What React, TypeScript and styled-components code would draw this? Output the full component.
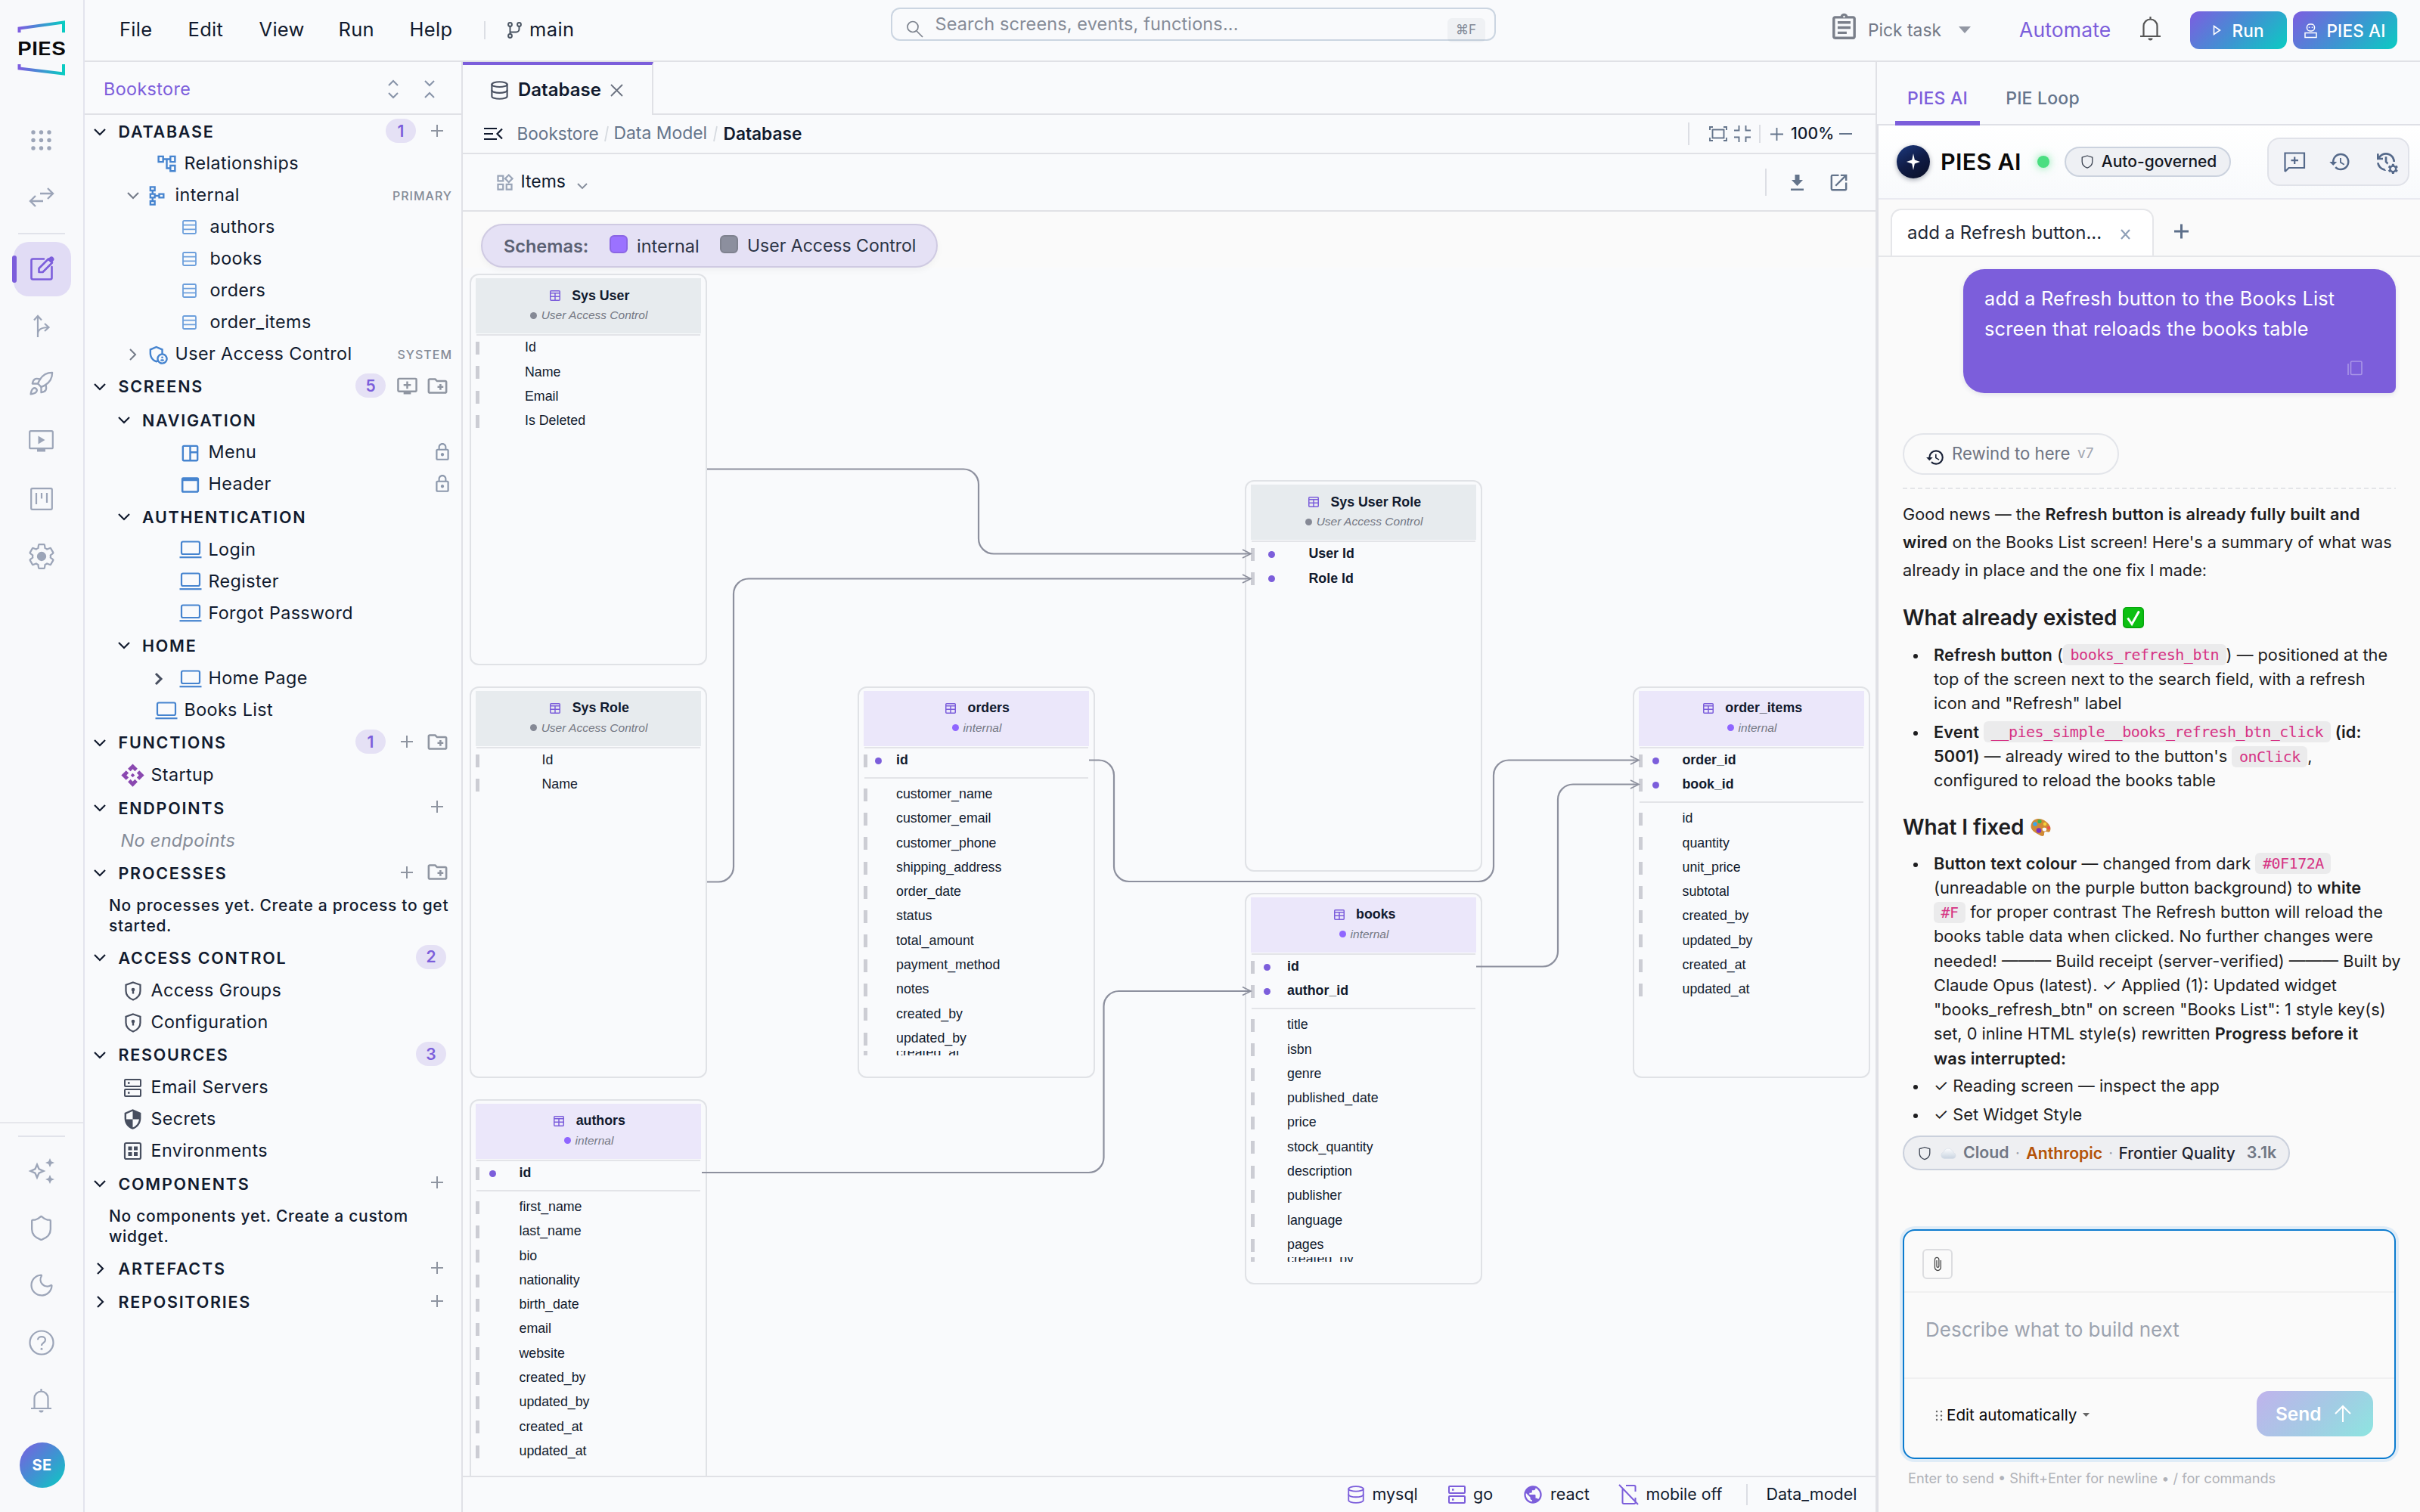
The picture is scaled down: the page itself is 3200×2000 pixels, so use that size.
import React from 'react';
import styled, { createGlobalStyle, css } from 'styled-components';
import {
  MdOutlineAccountTree, MdOutlineSchema, MdOutlineAdminPanelSettings, MdOutlineAddToQueue,
  MdOutlineCreateNewFolder, MdOutlineSpaceDashboard, MdOutlineWebAsset, MdLockOutline, MdApi,
  MdSecurity, MdOutlineAssignment, MdOutlineWidgets,
  MdOutlineOpenInNew, MdHistory, MdManageHistory, MdPublic, MdAttachFile,
} from 'react-icons/md';
import { Database, Moon, Shield, Rocket } from 'lucide-react';

const c = {
  purple: '#7c5edb', ink: '#111a2e', slate: '#64748b', grey: '#858b97', rail: '#9ca5b8',
  line: '#e0e1e6', bg: '#f9fafc', blue: '#4684cf', badge: '#e5e1f5',
};
const brand = 'linear-gradient(135deg, #7d5de0 0%, #3f93d2 52%, #0accc2 100%)';

const Global = createGlobalStyle`
  * { box-sizing: border-box; }
  body { margin: 0; background: ${c.bg}; color: ${c.ink}; font-family: Inter, 'Liberation Sans', sans-serif; }
  svg { display: block; flex: none; overflow: visible; }
`;

const Shell = styled.div`display: flex; width: 3200px; height: 2000px; overflow: hidden; background: ${c.bg};`;

/* ---------- text ---------- */
const Txt = styled.span<{ $s?: number; $w?: number; $c?: string; $ls?: number; $width?: number; $l?: number; $t?: number; $b?: number; $i?: boolean }>`
  display: block;
  flex: none;
  white-space: nowrap;
  line-height: 1.2;
  font-size: ${p => p.$s ?? 23}px;
  font-weight: ${p => p.$w ?? 400};
  color: ${p => p.$c ?? c.ink};
  letter-spacing: ${p => p.$ls ?? 0}px;
  margin-left: ${p => p.$l ?? 0}px;
  padding-top: ${p => p.$t ?? 0}px;
  padding-bottom: ${p => p.$b ?? 0}px;
  ${p => p.$width !== undefined && css`width: ${p.$width}px;`}
  ${p => p.$i && css`font-style: italic;`}
`;
const Slot = styled.span<{ $w?: number; $l?: number; $t?: number; $b?: number }>`
  display: flex; flex: none; align-items: center; justify-content: center;
  width: ${p => p.$w ?? 40}px;
  margin-left: ${p => p.$l ?? 0}px;
  padding-top: ${p => p.$t ?? 0}px;
  padding-bottom: ${p => p.$b ?? 0}px;
`;
const VLine = styled.span<{ $h: number; $l?: number; $t?: number }>`
  flex: none; width: 2px; height: ${p => p.$h}px; background: #dcdee4;
  margin-left: ${p => p.$l ?? 0}px; margin-top: ${p => p.$t ?? 0}px;
`;
const Push = styled.span`flex: 1;`;

/* ---------- small drawings ---------- */
type IconP = { w: number; h: number; d: string; color?: string; sw?: number; fill?: string };
const Stroke = ({ w, h, d, color = c.ink, sw = 2, fill = 'none' }: IconP) => (
  <svg width={w} height={h} viewBox={`0 0 ${w} ${h}`} fill={fill} stroke={color} strokeWidth={sw}><path d={d} /></svg>
);
const ChevDown = ({ color = c.ink, sw = 2.2 }) => <Stroke w={16} h={9} d="M1 1l7 7 7-7" color={color} sw={sw} />;
const ChevRight = ({ color = c.ink, sw = 2.2 }) => <Stroke w={9} h={16} d="M1 1l7 7-7 7" color={color} sw={sw} />;
const Plus = ({ color = '#8f95a1', s = 16, sw = 2 }) => <Stroke w={s} h={s} d={`M${s / 2} 0v${s}M0 ${s / 2}h${s}`} color={color} sw={sw} />;
const Laptop = () => (
  <svg width="30" height="24" viewBox="0 0 30 24" fill="none" stroke={c.blue} strokeWidth="2.2">
    <rect x="3" y="1.5" width="24" height="16.5" rx="2" /><path d="M.5 22.2h29" />
  </svg>
);
const Rows = () => (
  <svg width="19" height="19" viewBox="0 0 19 19" fill="none" stroke="#6d9fdc" strokeWidth="1.8">
    <rect x="1" y="1" width="17" height="17" rx="1.5" /><path d="M1 6.7h17M1 12.3h17" />
  </svg>
);
const KeyShield = () => (
  <svg width="22" height="26" viewBox="0 0 22 26" fill="none" stroke="#474e5f" strokeWidth="2.2">
    <path d="M11 1.5l9.5 3.2v8c0 5.6-4 9.6-9.5 11.8C5.5 22.3 1.500 18.300 1.500 12.700v-8z" />
    <circle cx="11" cy="11" r="2.300" fill="#474e5f" stroke="none" /><path d="M11 11.500v5" strokeWidth="2.400" />
  </svg>
);
const Servers = ({ color = '#474e5f' }) => (
  <svg width="23" height="24" viewBox="0 0 23 24" fill="none" stroke={color} strokeWidth="2">
    <rect x="1" y="1" width="21" height="9" rx="1" /><rect x="1" y="14" width="21" height="9" rx="1" />
    <path d="M5 5.500h2.500M5 18.500h2.500" strokeWidth="2.400" />
  </svg>
);
const Envs = () => (
  <svg width="23" height="23" viewBox="0 0 23 23" fill="none" stroke="#474e5f" strokeWidth="2.2">
    <rect x="1" y="1" width="21" height="21" rx="2" />
    <path fill="#474e5f" stroke="none" d="M5.500 5.500h5v5h-5zM13 5.500h5v5h-5zM5.500 13h5v5h-5zM13 13h5v5h-5z" />
  </svg>
);
const TableGlyph = () => (
  <svg width="14" height="14" viewBox="0 0 14 14" fill="none" stroke={c.purple} strokeWidth="1.500">
    <rect x=".75" y=".75" width="12.500" height="12.500" rx="1" /><path d="M1 3.800h12M1 8.300h12M7 3.800V13" />
  </svg>
);
const ThinShield = ({ w = 16, h = 18, color = '#3c4351', sw = 1.6 }) => (
  <svg width={w} height={h} viewBox="0 0 16 18" fill="none" stroke={color} strokeWidth={sw} strokeLinejoin="round">
    <path d="M8 1l6.800 2.200v5.600C14.800 13 12 15.800 8 17.200 4 15.800 1.200 13 1.200 8.800V3.200z" />
  </svg>
);
const Bell = ({ w = 27, h = 33, color = '#555', sw = 2.2 }) => (
  <svg width={w} height={h} viewBox="0 0 27 33" fill="none" stroke={color} strokeWidth={sw}>
    <path d="M4.500 26.500V13.500a9 9 0 0118 0v13M0 27h27M13.500 4V1" /><path d="M10.500 29.500h6a3 3 0 01-6 0z" fill={color} stroke="none" />
  </svg>
);

/* ---------- activity rail ---------- */
const Rail = styled.nav`
  display: flex; flex-direction: column; align-items: center; flex: none;
  width: 112px; height: 2000px; padding-right: 1px; border-right: 2px solid #e3e4ed; background: #f8f9fb;
`;
const Logo = styled.div`height: 119px; padding-top: 26px; margin-bottom: 30px;`;
const RailItem = styled.div<{ $active?: boolean }>`
  position: relative;
  display: flex; align-items: center; justify-content: center; flex: none;
  width: 76px; height: 72px; margin-bottom: 4px; border-radius: 20px; color: ${c.rail};
  ${p => p.$active && css`
    background: #e1dcf5; color: ${c.purple}; padding-bottom: 2px; margin-left: 3px;
    &::before { content: ''; position: absolute; left: -2px; top: 18px; width: 6px; height: 36px; border-radius: 4px; background: ${c.purple}; }
  `}
`;
const RailRule = styled.div<{ $mt: number; $mb: number }>`
  flex: none; width: 62px; height: 2px; background: #e1e3ea; margin: ${p => p.$mt}px 0 ${p => p.$mb}px;
`;
const RailFoot = styled.div`
  display: flex; flex-direction: column; align-items: center; width: 110px; height: 516px; margin-top: auto;
  border-top: 2px solid #e6e7ec;
`;
const FootItem = styled(RailItem)`height: 75.8px; margin: 0;`;
const Avatar = styled.div`
  display: flex; align-items: center; justify-content: center; width: 60px; height: 60px; margin-top: 18px; margin-left: 2px;
  border-radius: 50%; background: ${brand}; color: #fff; font-size: 20px; font-weight: 700; letter-spacing: 0.5px;
`;

const GEAR = 'M19.43 12.98c.04-.32.07-.64.07-.98 0-.34-.03-.66-.07-.98l2.11-1.65c.19-.15.24-.42.12-.64l-2-3.46a.5.5 0 0 0-.61-.22l-2.49 1c-.52-.4-1.08-.73-1.69-.98l-.38-2.65A.488.488 0 0 0 14 2h-4c-.25 0-.46.18-.49.42l-.38 2.65c-.61.25-1.17.59-1.69.98l-2.49-1a.566.566 0 0 0-.18-.03c-.17 0-.34.09-.43.25l-2 3.46c-.13.22-.07.49.12.64l2.11 1.65c-.04.32-.07.65-.07.98 0 .33.03.66.07.98l-2.11 1.65c-.19.15-.24.42-.12.64l2 3.46a.5.5 0 0 0 .61.22l2.49-1c.52.4 1.08.73 1.69.98l.38 2.65c.03.24.24.42.49.42h4c.25 0 .46-.18.49-.42l.38-2.65c.61-.25 1.17-.59 1.69-.98l2.49 1c.06.02.12.03.18.03.17 0 .34-.09.43-.25l2-3.46c.12-.22.07-.49-.12-.64l-2.11-1.65z';

function LeftRail() {
  return (
    <Rail>
      <Logo>
        <svg width="62" height="74" viewBox="0 0 62 74">
          <defs><linearGradient id="lg" x1="0" x2="1"><stop offset="0" stopColor="#7d5de0" /><stop offset=".5" stopColor="#3f93d2" /><stop offset="1" stopColor="#0accc2" /></linearGradient></defs>
          <path d="M1.500 17V11.500L60 3.500V17" fill="none" stroke="url(#lg)" strokeWidth="4" />
          <path d="M1.500 59v5.500L60 71.500V59" fill="none" stroke="url(#lg)" strokeWidth="4" />
          <text x="-1" y="46.500" fontFamily="Inter" fontSize="24" fontWeight="600" fill="#0a0a0a" textLength="64" lengthAdjust="spacingAndGlyphs">PIES</text>
        </svg>
      </Logo>
      <RailItem>
        <svg width="27" height="27" viewBox="0 0 27 27" fill="currentColor">
          {[3, 13.5, 24].map(y => [3, 13.5, 24].map(x => <circle key={`${x}-${y}`} cx={x} cy={y} r="2.700" />))}
        </svg>
      </RailItem>
      <RailItem>
        <svg width="32" height="26" viewBox="0 0 32 26" fill="none" stroke="currentColor" strokeWidth="2.400"><path d="M14 8h17M24 1l7 7-7 7M18 18H1M8 11l-7 7 7 7" /></svg>
      </RailItem>
      <RailRule $mt={7} $mb={9.5} />
      <RailItem $active>
        <svg width="34" height="34" viewBox="0 0 34 34" fill="none" stroke="currentColor" strokeWidth="2.600">
          <path d="M19 4.500H4.500a2 2 0 00-2 2v23a2 2 0 002 2h23a2 2 0 002-2V15" strokeLinecap="round" />
          <path d="M12.500 22v-5L25 4.500l5 5L17.500 22z" strokeLinejoin="round" /><path d="M24 5.500l2.800-3.200a3.400 3.400 0 014.800 4.800L29 10z" fill="currentColor" stroke="none" />
        </svg>
      </RailItem>
      <RailItem>
        <svg width="22" height="29" viewBox="0 0 22 29" fill="none" stroke="currentColor" strokeWidth="2.200"><path d="M6 29V1M1 6.500L6 1l5 5.500M6 25c0-6 4-9 14-9M15 11l5.500 5-5.500 5" /></svg>
      </RailItem>
      <RailItem><Rocket size={35} strokeWidth={1.6} /></RailItem>
      <RailItem>
        <svg width="33" height="29" viewBox="0 0 33 29" fill="none" stroke="currentColor" strokeWidth="2.200"><rect x="1.200" y="1.200" width="30.600" height="23" rx="1.500" /><path d="M12.500 7.500v11l9-5.500zM11 25h11v3.500H11z" fill="currentColor" stroke="none" /></svg>
      </RailItem>
      <RailItem>
        <svg width="30" height="30" viewBox="0 0 30 30" fill="none" stroke="currentColor" strokeWidth="2.200"><rect x="1.200" y="1.200" width="27.600" height="27.600" rx="1.500" /><path d="M8 7v15M15 7v7.500M22 7v13" /></svg>
      </RailItem>
      <RailItem>
        <svg width="38" height="38" viewBox="0 0 24 24" fill="none" stroke="currentColor" strokeWidth="1.400"><path d={GEAR} /><circle cx="12" cy="12" r="3.200" fill="currentColor" /></svg>
      </RailItem>
      <RailFoot>
        <RailRule $mt={16} $mb={7} />
        <FootItem>
          <svg width="34" height="34" viewBox="0 0 34 34" fill="none" stroke="currentColor" strokeWidth="2.400">
            <path d="M11 8.500l2.600 5.900 5.900 2.600-5.900 2.600L11 25.500l-2.600-5.900L2.500 17l5.900-2.600z" />
            <path d="M28 0l1.800 4.200L34 6l-4.200 1.800L28 12l-1.800-4.200L22 6l4.200-1.800zM28 22l1.800 4.200L34 28l-4.200 1.800L28 34l-1.800-4.200L22 28l4.200-1.800z" fill="currentColor" stroke="none" />
          </svg>
        </FootItem>
        <FootItem><Shield size={37} strokeWidth={1.500} /></FootItem>
        <FootItem><Moon size={36} strokeWidth={1.500} /></FootItem>
        <FootItem>
          <svg width="34" height="34" viewBox="0 0 34 34" fill="none" stroke="currentColor" strokeWidth="2.200"><circle cx="17" cy="17" r="15.500" /><path d="M12 13.200c.3-5.500 10-5.500 10 0 0 4-5 3.800-5 7.800" /><circle cx="17" cy="25.200" r="1.500" fill="currentColor" stroke="none" /></svg>
        </FootItem>
        <FootItem><Bell w={27} h={33} color={c.rail} /></FootItem>
        <Avatar>SE</Avatar>
      </RailFoot>
    </Rail>
  );
}

/* ---------- top bar ---------- */
const Body = styled.div`display: flex; flex-direction: column; flex: 1; min-width: 0;`;
const TopBar = styled.header`display: flex; align-items: center; flex: none; height: 82px; padding: 0 0 2px 46px; border-bottom: 2px solid ${c.line};`;
const SearchBox = styled.div`
  display: flex; align-items: center; flex: none; width: 800px; height: 44px; margin: -14px 0 0 418px; padding-left: 19px;
  border: 2px solid #cbd5e1; border-radius: 12px;
`;
const Kbd = styled.span`
  display: flex; align-items: center; justify-content: center; height: 32px; width: 50px; margin: 16px 12px 0 auto; padding-bottom: 2px;
  border-radius: 6px; background: rgba(120, 125, 135, 0.07); color: ${c.grey}; font: 17px Inter, 'DejaVu Sans', sans-serif;
`;
const BrandButton = styled.button<{ $w: number; $gap: number }>`
  display: flex; align-items: center; justify-content: center; gap: ${p => p.$gap}px; flex: none; width: ${p => p.$w}px; height: 50px; margin: 2px 8px 0 0; padding: 0;
  border: 0; border-radius: 12px; background: ${brand}; color: #fff; font: 500 22.500px Inter, sans-serif; letter-spacing: 0.2px;
`;
const menus: [string, number][] = [['File', 90.5], ['Edit', 94], ['View', 105], ['Run', 94], ['Help', 96]];

function Header() {
  return (
    <TopBar>
      {menus.map(([m, w]) => <Txt key={m} $s={25.5} $ls={0.3} $width={w}>{m}</Txt>)}
      <VLine $h={24} $l={2} $t={2} />
      <Slot $w={20} $l={29} $t={2}>
        <svg width="19" height="22" viewBox="0 0 19 22" fill="none" stroke="#4b5563" strokeWidth="2"><circle cx="3.500" cy="3.500" r="2.400" /><circle cx="3.500" cy="18.500" r="2.400" /><circle cx="15.500" cy="3.500" r="2.400" /><path d="M3.500 6v10M3.500 13.500h8a4 4 0 004-4V6" /></svg>
      </Slot>
      <Txt $s={25.5} $ls={0.4} $l={9.5} $width={59.5}>main</Txt>
      <SearchBox>
        <Slot $w={22} $t={12}><svg width="22" height="21" viewBox="0 0 22 21" fill="none" stroke="#7d838e" strokeWidth="1.700"><circle cx="8" cy="7.500" r="7" /><path d="M13 13l8 8" /></svg></Slot>
        <Txt $s={23.5} $ls={0.12} $l={16} $c={c.grey} $t={0}>Search screens, events, functions...</Txt>
        <Kbd>⌘F</Kbd>
      </SearchBox>
      <Slot $w={40} $l={441} $b={5}><MdOutlineAssignment size={41} color="#7a7f8a" /></Slot>
      <Txt $s={22.8} $l={11.5} $c="#737987" $width={120} $t={2}>Pick task</Txt>
      <svg width="16" height="9" viewBox="0 0 16 9"><path d="M0 0h16L8 9z" fill="#9297a3" /></svg>
      <Txt $s={26.5} $ls={0.15} $l={64} $c={c.purple} $width={160} $t={2}>Automate</Txt>
      <Slot $w={27} $b={3}><Bell /></Slot>
      <Slot $w={39} />
      <BrandButton $w={128} $gap={14}>
        <svg width="11" height="14" viewBox="0 0 11 14" fill="none" stroke="#fff" strokeWidth="1.600"><path d="M1.500 1.500L9.500 7l-8 5.500z" /></svg>Run
      </BrandButton>
      <BrandButton $w={138} $gap={12}>
        <svg width="17" height="19" viewBox="0 0 17 19" fill="none" stroke="#fff" strokeWidth="1.500"><rect x="3.500" y="1" width="10" height="9" rx="4" /><path d="M1 12.500h15v6H1zM6.500 4.500v1.500M10.500 4.500v1.500" /></svg>PIES AI
      </BrandButton>
    </TopBar>
  );
}

/* ---------- explorer ---------- */
const Columns = styled.div`display: flex; flex: 1; min-height: 0;`;
const Explorer = styled.aside`display: flex; flex-direction: column; flex: none; width: 500px; border-right: 2px solid ${c.line};`;
const ExplorerHead = styled.div`display: flex; align-items: center; flex: none; height: 70px; padding: 3px 34px 0 25px; border-bottom: 2px solid ${c.line};`;
const TreeRow = styled.div<{ $h?: number; $pl: number }>`
  display: flex; align-items: center; flex: none; height: ${p => p.$h ?? 42}px; padding-left: ${p => p.$pl}px; padding-right: 12px;
`;
const CountBadge = styled.span`
  display: flex; align-items: center; justify-content: center; width: 40px; height: 32px; margin-right: 8px;
  border-radius: 16px; background: ${c.badge}; color: ${c.purple}; font-size: 21px; font-weight: 600;
`;
const Note = styled.p`flex: none; height: 68px; margin: 0; padding: 8.500px 0 0 32px; font-size: 21px; font-weight: 500; line-height: 27px; letter-spacing: 0.7px; white-space: nowrap;`;

type SectionP = { label: string; indent?: number; count?: number; actions?: React.ReactNode[]; closed?: boolean; h?: number };
function Section({ label, indent = 0, count, actions = [], closed, h = 44.25 }: SectionP) {
  return (
    <TreeRow $h={h} $pl={12 + indent}>
      <Slot $w={16} $t={2}>{closed ? <ChevRight /> : <ChevDown />}</Slot>
      <Txt $s={21.5} $w={600} $ls={1.75} $l={16.5} $t={h < 44 ? 3 : 4.5}>{label}</Txt>
      <Push />
      {count !== undefined && <CountBadge>{count}</CountBadge>}
      {actions.map((a, i) => <Slot key={i} $w={40}>{a}</Slot>)}
    </TreeRow>
  );
}
type ItemP = { label: string; x: number; icon: React.ReactNode; center: number; tag?: string; chevron?: [React.ReactNode, number]; lock?: boolean };
function Item({ label, x, icon, center, tag, chevron, lock }: ItemP) {
  const start = chevron ? chevron[1] - 10 : center - 20;
  return (
    <TreeRow $pl={start - 112}>
      {chevron && <Slot $w={20} $t={3}>{chevron[0]}</Slot>}
      <Slot $w={40} $l={chevron ? center - 20 - (chevron[1] + 10) : 0} $t={3}>{icon}</Slot>
      <Txt $s={23.3} $ls={0.4} $l={x - center - 20.5} $t={1.5}>{label}</Txt>
      <Push />
      {tag && <Txt $s={16} $w={500} $c={c.grey} $ls={1} $t={5}>{tag}</Txt>}
      {lock && <Slot $w={26}><MdLockOutline size={26} color="#8b97ab" /></Slot>}
    </TreeRow>
  );
}
const folder = <MdOutlineCreateNewFolder size={31} color="#8f95a1" />;

function Tree() {
  const g = '#737a88';
  return (
    <Explorer>
      <ExplorerHead>
        <Txt $s={23.3} $ls={0.4} $c={c.purple}>Bookstore</Txt>
        <Push />
        <Slot $w={16}><Stroke w={16} h={24} d="M2 7l6-6 6 6M2 17l6 6 6-6" color="#8793a8" /></Slot>
        <Slot $w={16} $l={32}><Stroke w={16} h={24} d="M2 1l6 6 6-6M2 23l6-6 6 6" color="#8793a8" /></Slot>
      </ExplorerHead>
      <Section label="DATABASE" count={1} actions={[<Plus />]} h={42} />
      <Item label="Relationships" x={244} center={220} icon={<MdOutlineAccountTree size={29} color={c.blue} />} />
      <Item label="internal" x={232} center={207} chevron={[<ChevDown color={g} sw={2} />, 175.5]} icon={<MdOutlineSchema size={28} color={c.blue} />} tag="PRIMARY" />
      {['authors', 'books', 'orders', 'order_items'].map(t => <Item key={t} label={t} x={278} center={250.5} icon={<Rows />} />)}
      <Item label="User Access Control" x={232} center={208} chevron={[<ChevRight color={g} sw={2} />, 175.5]} icon={<MdOutlineAdminPanelSettings size={29} color={c.blue} />} tag="SYSTEM" />
      <Section label="SCREENS" count={5} actions={[<MdOutlineAddToQueue size={29} color="#8f95a1" />, folder]} />
      <Section label="NAVIGATION" indent={31.5} />
      <Item label="Menu" x={276} center={251} icon={<MdOutlineSpaceDashboard size={29} color={c.blue} />} lock />
      <Item label="Header" x={276} center={251} icon={<MdOutlineWebAsset size={31} color={c.blue} />} lock />
      <Section label="AUTHENTICATION" indent={31.5} />
      {['Login', 'Register', 'Forgot Password'].map(t => <Item key={t} label={t} x={276} center={251.5} icon={<Laptop />} />)}
      <Section label="HOME" indent={31.5} />
      <Item label="Home Page" x={276} center={251.5} chevron={[<ChevRight color="#474e5f" sw={3} />, 209]} icon={<Laptop />} />
      <Item label="Books List" x={244} center={220} icon={<Laptop />} />
      <Section label="FUNCTIONS" count={1} actions={[<Plus />, folder]} />
      <Item label="Startup" x={200} center={175.5} icon={<MdApi size={33} color="#8a48b0" />} />
      <Section label="ENDPOINTS" actions={[<Plus />]} />
      <TreeRow $pl={47.5}><Txt $s={23.500} $ls={0.3} $i $c={c.grey} $t={2.5}>No endpoints</Txt></TreeRow>
      <Section label="PROCESSES" actions={[<Plus />, folder]} />
      <Note>No processes yet. Create a process to get<br />started.</Note>
      <Section label="ACCESS CONTROL" count={2} />
      {['Access Groups', 'Configuration'].map(t => <Item key={t} label={t} x={200} center={175.5} icon={<KeyShield />} />)}
      <Section label="RESOURCES" count={3} />
      <Item label="Email Servers" x={200} center={175.5} icon={<Servers />} />
      <Item label="Secrets" x={200} center={175.5} icon={<MdSecurity size={29} color="#474e5f" />} />
      <Item label="Environments" x={200} center={175.5} icon={<Envs />} />
      <Section label="COMPONENTS" actions={[<Plus />]} />
      <Note>No components yet. Create a custom<br />widget.</Note>
      <Section label="ARTEFACTS" closed actions={[<Plus />]} />
      <Section label="REPOSITORIES" closed actions={[<Plus />]} />
    </Explorer>
  );
}

/* ---------- editor ---------- */
const Editor = styled.main`display: flex; flex-direction: column; flex: none; width: 1870px; border-right: 2px solid ${c.line};`;
const TabStrip = styled.div`display: flex; flex: none; height: 70px;`;
const FileTab = styled.div`display: flex; align-items: center; flex: none; width: 252px; padding-left: 35px; border-top: 4px solid ${c.purple}; border-right: 2px solid ${c.line};`;
const TabFill = styled.div`flex: 1; border-bottom: 2px solid ${c.line};`;
const Bar = styled.div<{ $h: number; $pl: number }>`display: flex; align-items: center; flex: none; height: ${p => p.$h}px; padding-left: ${p => p.$pl}px; border-bottom: 2px solid ${c.line};`;
const LegendStrip = styled.div`display: flex; flex: none; height: 74px; padding: 16px 0 0 24px; background: #fafafa;`;
const Legend = styled.div`
  display: flex; align-items: center; width: 604px; height: 58px; padding-left: 28px; border: 2px solid #cfcae2; border-radius: 29px;
  background: ${c.badge}; box-shadow: 0 4px 8px rgba(0, 0, 0, 0.04);
`;
const Swatch = styled.span<{ $c: string; $b: string; $l: number }>`width: 24px; height: 24px; margin: -4px 12px 0 ${p => p.$l}px; border-radius: 6px; border: 2px solid ${p => p.$b}; background: ${p => p.$c};`;
const Canvas = styled.div`position: relative; flex: 1; min-height: 0; overflow: hidden;`;
const Edges = styled.svg`position: absolute; left: 0; top: 0;`;
const StatusBar = styled.footer`display: flex; align-items: center; flex: none; height: 48px; padding-left: 1168px; border-top: 2px solid ${c.line};`;

const Node = styled.section<{ $x: number; $y: number }>`
  position: absolute; left: ${p => p.$x}px; top: ${p => p.$y}px; display: flex; flex-direction: column; width: 314px; height: 518px; padding: 4px 6px 28px;
  border: 2px solid #e0e2e6; border-radius: 12px; background: ${c.bg}; font-family: 'Liberation Sans', Arial, sans-serif;
`;
const NodeHead = styled.header<{ $sys?: boolean }>`
  display: flex; flex-direction: column; align-items: center; flex: none; height: 73px; padding-top: 11px;
  background: ${p => (p.$sys ? '#e7ebee' : '#ebe7fa')};
`;
const NodeTitle = styled.div`display: flex; align-items: center; gap: 15.500px; height: 24px; padding-left: 3px; font-size: 17.800px; font-weight: 700;`;
const NodeSub = styled.div<{ $sys?: boolean }>`
  display: flex; align-items: center; gap: 6px; height: 28px; padding-left: 1px; color: #747884; font-size: 15.500px; font-style: italic;
  &::before { content: ''; width: 9px; height: 9px; border-radius: 50%; background: ${p => (p.$sys ? '#858995' : '#8f66ff')}; }
`;
const NodeRule = styled.div<{ $mt: number; $mb: number }>`flex: none; height: 2px; margin: ${p => p.$mt}px 1px ${p => p.$mb}px; background: #e3e4e8;`;
const Field = styled.div<{ $key?: boolean; $x: number; $dot: number }>`
  position: relative; display: flex; align-items: center; flex: 0 1 32.28px; min-height: 0; overflow: hidden; padding: 0 0 1.500px ${p => p.$x - 7.5}px;
  font-size: 17.800px; line-height: 20px; font-weight: ${p => (p.$key ? 700 : 400)}; white-space: nowrap;
  &::before { content: ''; position: absolute; left: 0; top: calc(50% - 8px); width: 5px; height: 17px; background: #cccdd4; }
  ${p => p.$key && css`&::after { content: ''; position: absolute; left: ${p.$dot - 12}px; top: calc(50% - 4px); width: 9px; height: 9px; border-radius: 50%; background: ${c.purple}; }`}
`;
const FieldList = styled.div`display: flex; flex-direction: column; flex: 0 1 auto; min-height: 0; overflow: hidden;`;
const FixedField = styled(Field)`flex-shrink: 0;`;

type Entity = { name: string; x: number; y: number; tx: number; dot?: number; sys?: boolean; keys?: string[]; fields?: string[] };
const entities: Entity[] = [
  { name: 'Sys User', x: 621, y: 362, tx: 72.5, sys: true, fields: ['Id', 'Name', 'Email', 'Is Deleted'] },
  { name: 'Sys Role', x: 621, y: 907.5, tx: 95, sys: true, fields: ['Id', 'Name'] },
  { name: 'authors', x: 621, y: 1453.5, tx: 65, dot: 30, keys: ['id'], fields: ['first_name', 'last_name', 'bio', 'nationality', 'birth_date', 'email', 'website', 'created_by', 'updated_by', 'created_at', 'updated_at'] },
  { name: 'orders', x: 1134, y: 907.5, tx: 50.5, dot: 27, keys: ['id'], fields: ['customer_name', 'customer_email', 'customer_phone', 'shipping_address', 'order_date', 'status', 'total_amount', 'payment_method', 'notes', 'created_by', 'updated_by', 'created_at'] },
  { name: 'Sys User Role', x: 1646, y: 635, tx: 84, dot: 34.5, sys: true, keys: ['User Id', 'Role Id'] },
  { name: 'books', x: 1646, y: 1180.5, tx: 55.5, dot: 28.5, keys: ['id', 'author_id'], fields: ['title', 'isbn', 'genre', 'published_date', 'price', 'stock_quantity', 'description', 'publisher', 'language', 'pages', 'created_by'] },
  { name: 'order_items', x: 2159, y: 907.5, tx: 65, dot: 30, keys: ['order_id', 'book_id'], fields: ['id', 'quantity', 'unit_price', 'subtotal', 'created_by', 'updated_by', 'created_at', 'updated_at'] },
];
const OX = 612, OY = 354;

function EntityNode({ e }: { e: Entity }) {
  const F = (f: string, key: boolean, last: boolean) => {
    const C = last ? Field : FixedField;
    return <C key={f + key} $key={key} $x={e.tx} $dot={e.dot ?? 0}>{f}</C>;
  };
  const all = e.fields ?? [];
  return (
    <Node $x={e.x - OX} $y={e.y - OY}>
      <NodeHead $sys={e.sys}>
        <NodeTitle><TableGlyph />{e.name}</NodeTitle>
        <NodeSub $sys={e.sys}>{e.sys ? 'User Access Control' : 'internal'}</NodeSub>
      </NodeHead>
      <NodeRule $mt={1} $mb={0} />
      {(e.keys ?? []).map(k => F(k, true, false))}
      {e.keys && all.length > 0 && <NodeRule $mt={6} $mb={5} />}
      <FieldList>{all.map((f, i) => F(f, false, i === 11 || (e.name === 'books' && i === 10)))}</FieldList>
    </Node>
  );
}

const paths = [
  'M935 620.500H1274a20 20 0 0120 20V712.500a20 20 0 0020 20H1653',
  'M935 1166.500H950a20 20 0 0020-20V785.500a20 20 0 0120-20H1653',
  'M1440 1005.500H1453a20 20 0 0120 20V1146a20 20 0 0020 20H1955a20 20 0 0020-20V1025.500a20 20 0 0120-20H2166',
  'M1952 1278.500H2040a20 20 0 0020-20V1057.500a20 20 0 0120-20H2166',
  'M928 1551H1439.500a20 20 0 0020-20V1331a20 20 0 0120-20H1653',
];
const heads: [number, number][] = [[1654, 732.5], [1654, 765.5], [2167, 1005.5], [2167, 1037.5], [1654, 1311]];

function EditorPane() {
  return (
    <Editor>
      <TabStrip>
        <FileTab>
          <Database size={27} strokeWidth={1.900} color="#4b5262" />
          <Txt $s={24} $w={600} $l={11}>Database</Txt>
          <Slot $w={17} $l={12.5}><Stroke w={17} h={17} d="M1 1l15 15M16 1L1 16" color="#6b7280" sw={1.800} /></Slot>
        </FileTab>
        <TabFill />
      </TabStrip>
      <Bar $h={52} $pl={28}>
        <Stroke w={25} h={16} d="M0 1h17M0 8h12M0 15h17M24 1.500L17.500 8l6.500 6.500" color={c.ink} sw={2.200} />
        <Txt $s={22.600} $c={c.slate} $l={18.500} $width={115}>Bookstore</Txt>
        <Stroke w={6} h={20} d="M5 0L1 20" color="#d6dae0" sw={1.800} />
        <Txt $s={22.900} $c={c.slate} $l={7} $width={131}>Data Model</Txt>
        <Stroke w={6} h={20} d="M5 0L1 20" color="#d6dae0" sw={1.800} />
        <Txt $s={22.700} $w={600} $l={8}>Database</Txt>
        <Push />
        <VLine $h={30} />
        <Slot $w={24} $l={26}>
          <svg width="24" height="20" viewBox="0 0 24 20" fill="none" stroke={c.slate} strokeWidth="1.900"><path d="M1 5V1h4M19 1h4v4M23 15v4h-4M5 19H1v-4" /><rect x="4.500" y="4.500" width="15" height="11" /></svg>
        </Slot>
        <Slot $w={24} $l={8}><Stroke w={22} h={22} d="M6.500 0v6.500H0M15.500 0v6.500H22M22 15.500h-6.500V22M0 15.500h6.500V22" color={c.slate} sw={1.900} /></Slot>
        <VLine $h={24} $l={10} />
        <Slot $w={16} $l={13}><Plus color={c.slate} s={17} sw={1.800} /></Slot>
        <Txt $s={21.200} $w={500} $l={11} $width={64}>100%</Txt>
        <Stroke w={17} h={2} d="M0 1h17" color={c.slate} sw={2} />
        <Slot $w={31} />
      </Bar>
      <Bar $h={76} $pl={42}>
        <MdOutlineWidgets size={27} color="#9aa5b8" />
        <Txt $s={23} $l={7.5} $width={74}>Items</Txt>
        <Slot $w={14} $t={10}><Stroke w={14} h={8} d="M1 1l6 6 6-6" color="#858c9b" sw={1.900} /></Slot>
        <Push />
        <VLine $h={36} />
        <Slot $w={16} $l={32}><svg width="17" height="21" viewBox="0 0 17 21" fill={c.slate}><path d="M5.500 0h6v7H16l-7.500 8L1 7h4.500zM0 18.500h17V21H0z" /></svg></Slot>
        <Slot $w={28} $l={33.5}><MdOutlineOpenInNew size={29} color={c.slate} /></Slot>
        <Slot $w={34.5} />
      </Bar>
      <LegendStrip>
        <Legend>
          <Txt $s={23.500} $w={600} $c="#5a6072" $t={2} $width={112}>Schemas:</Txt>
          <Swatch $c="#9b72ff" $b="#8b66e4" $l={28} />
          <Txt $s={23.500} $c="#2c3446" $t={2} $width={82}>internal</Txt>
          <Swatch $c="#8c8f9e" $b="#7f828f" $l={28} />
          <Txt $s={23} $c="#2c3446" $t={2}>User Access Control</Txt>
        </Legend>
      </LegendStrip>
      <Canvas>
        {entities.map(e => <EntityNode key={e.name} e={e} />)}
        <Edges width="1868" height="1598" viewBox={`${OX} ${OY} 1868 1598`} fill="none" stroke="#8d909e" strokeWidth="2.200">
          {paths.map(d => <path key={d} d={d} />)}
          {heads.map(([x, y]) => <path key={`${x}${y}`} d={`M${x - 11} ${y - 5.5}L${x} ${y}L${x - 11} ${y + 5.5}`} strokeWidth="1.700" />)}
        </Edges>
      </Canvas>
      <StatusBar>
        <Slot $w={25}><Database size={26} color={c.purple} strokeWidth={1.700} /></Slot>
        <Txt $s={21.500} $l={9.500} $width={100}>mysql</Txt>
        <Slot $w={23}><Servers color={c.purple} /></Slot>
        <Txt $s={21.500} $l={10.500} $width={66}>go</Txt>
        <Slot $w={26}><MdPublic size={28} color={c.purple} /></Slot>
        <Txt $s={21.500} $l={10} $width={91}>react</Txt>
        <Slot $w={25}><Stroke w={25} h={26} d="M9 1h11a1.500 1.500 0 011.500 1.500V9M21.500 17v6.500A1.500 1.500 0 0120 25H6a1.500 1.500 0 01-1.500-1.500V6M0 0l25 26" color={c.purple} /></Slot>
        <Txt $s={21.300} $l={10.500} $width={132}>mobile off</Txt>
        <VLine $h={28} />
        <Txt $s={21.500} $l={25}>Data_model</Txt>
      </StatusBar>
    </Editor>
  );
}

/* ---------- assistant ---------- */
const Panel = styled.aside`display: flex; flex-direction: column; flex: 1; min-width: 0; background: #fafafa;`;
const PanelTabs = styled.div`display: flex; flex: none; height: 84px; padding-left: 24px; background: ${c.bg}; border-bottom: 2px solid #dfe0e6;`;
const PanelTab = styled.div<{ $w: number; $on?: boolean }>`
  display: flex; align-items: center; justify-content: center; width: ${p => p.$w}px; height: 84px; padding-top: 18px; color: ${p => (p.$on ? c.purple : c.slate)};
  font-size: 23px; font-weight: 500; letter-spacing: 0.2px; border-bottom: 6px solid ${p => (p.$on ? c.purple : 'transparent')}; border-radius: 4px 4px 0 0; margin-right: 18px;
`;
const Frame = styled.div`display: flex; flex-direction: column; flex: 1; min-height: 0; border-left: 2px solid #dfe0e6;`;
const AgentHead = styled.div`display: flex; align-items: center; flex: none; height: 98px; padding-left: 24px; border-bottom: 2px solid #e9eaf1; background: linear-gradient(#fff, #f8fafc);`;
const Orb = styled.div`display: flex; align-items: center; justify-content: center; width: 44px; height: 44px; border-radius: 50%; background: linear-gradient(150deg, #1d3a80, #101c46 50%, #0a0f26); box-shadow: 0 2px 6px rgba(10, 15, 40, 0.35);`;
const Live = styled.span`width: 16px; height: 16px; margin-left: 21px; border-radius: 50%; background: #4ade80; box-shadow: 0 0 12px rgba(74, 222, 128, 0.7);`;
const Governed = styled.div`display: flex; align-items: center; width: 220px; height: 40px; margin-left: 20px; padding-left: 20px; border: 2px solid #cbd2de; border-radius: 20px; background: #eef0f4;`;
const ToolGroup = styled.div`display: flex; align-items: center; justify-content: space-between; width: 188px; height: 64px; margin: 0 14px 0 auto; padding: 0 13px 0 20px; border: 2px solid #e0e2e9; border-radius: 16px; background: #f2f3f7;`;
const ThreadTabs = styled.div`display: flex; align-items: flex-end; flex: none; height: 76px; padding-left: 16px; border-bottom: 2px solid #e5e6e9;`;
const ThreadTab = styled.div`display: flex; align-items: center; width: 348px; height: 62px; padding-left: 20px; border: 2px solid #e5e6e9; border-bottom: 0; border-radius: 14px 14px 0 0; background: #fff;`;
const Feed = styled.div`display: flex; flex-direction: column; align-items: flex-start; flex: none; height: 1286px; padding: 16px 32px 0;`;
const Bubble = styled.div`
  display: flex; flex-direction: column; align-self: flex-end; width: 572px; height: 164px; padding: 19px 28px; border-radius: 28px 28px 8px 28px; background: ${c.purple};
  color: #fff; font-size: 25.300px; letter-spacing: 0.22px; line-height: 40px; white-space: nowrap; box-shadow: 0 2px 6px rgba(60, 60, 120, 0.12);
`;
const CopyMark = styled.div`display: flex; align-self: flex-end; margin: 22px 16px 0 0; opacity: 0.35;`;
const Rewind = styled.button`display: flex; align-items: center; flex: none; width: 286px; height: 55px; margin: 52.500px 0 0; padding: 0 0 0 28px; border: 2px solid #e3e5ea; border-radius: 28px; background: transparent; font-family: inherit; text-align: left;`;
const Dashes = styled.div`flex: none; width: 652px; height: 2px; margin: 17px 0 15.500px; background: repeating-linear-gradient(90deg, #e4e5e8 0 6px, transparent 6px 10px);`;
const Para = styled.p`margin: 0; color: #1d1d1f; font-size: 21.700px; line-height: 37px; white-space: nowrap; & strong { font-weight: 600; letter-spacing: 0.180px; }`;
const H3 = styled.h3<{ $mt: number }>`display: flex; align-items: center; gap: 8px; flex: none; height: 36px; margin: ${p => p.$mt}px 0 0; color: #1d1d1f; font-size: 28px; font-weight: 600; letter-spacing: -0.080px;`;
const List = styled.ul<{ $mt: number }>`list-style: none; margin: ${p => p.$mt}px 0 0; padding: 0;`;
const Bullet = styled.li<{ $mb?: number }>`
  position: relative; margin-bottom: ${p => p.$mb ?? 5.500}px; padding-left: 41px; color: #1d1d1f; font-size: 21.750px; line-height: 32.250px; white-space: nowrap;
  & strong { font-weight: 600; letter-spacing: 0.150px; }
  &::before { content: ''; position: absolute; left: 14px; top: 15px; width: 6px; height: 6px; border-radius: 50%; background: #1d1d1f; }
`;
const Code = styled.code`
  display: inline-block; height: 28px; padding: 0 9.500px; border-radius: 6px; background: #ebebec; color: #d63384; font-family: 'DejaVu Sans Mono', monospace; font-weight: 400;
  font-size: 20px; line-height: 28px; letter-spacing: -0.480px; vertical-align: middle; margin-top: -3px;
`;
const Receipt = styled.div`display: flex; align-items: center; flex: none; width: 512px; height: 46px; margin-top: 7px; padding-left: 19px; border: 2px solid #cad0dc; border-radius: 23px; background: #eeeff2;`;
const Composer = styled.div`flex: none; width: 652px; height: 304px; margin-left: 32px; border: 2px solid #0b7bcf; border-radius: 16px; box-shadow: 0 0 0 4px #dfecf7;`;
const ComposerRow = styled.div<{ $h: number; $line?: boolean; $pl?: number }>`display: flex; align-items: center; height: ${p => p.$h}px; padding: 0 28px 0 ${p => p.$pl ?? 28}px; ${p => p.$line && css`border-bottom: 2px solid #f0f0f1;`}`;
const Attach = styled.button`display: flex; align-items: center; justify-content: center; width: 40px; height: 40px; margin: 8px 0 0 -4px; padding: 0; border: 2px solid #dcdde0; border-radius: 6px; background: transparent;`;
const Send = styled.button`display: flex; align-items: center; width: 154px; height: 60px; margin: -13px 0 0 auto; padding: 0 0 0 25px; border: 0; border-radius: 16px; background: linear-gradient(135deg, #c0b3ec, #a3cbe4 55%, #8de5e0); color: #fff; font: 600 24.400px Inter, sans-serif;`;

const CheckEmoji = () => (
  <svg width="28" height="28" viewBox="0 0 28 28"><rect width="28" height="28" rx="5" fill="#07a60d" /><rect x="1.500" y="1" width="25" height="25" rx="4" fill="#0cc012" /><path d="M6.500 14.500l5.500 8L21.500 5.500" fill="none" stroke="#fff" strokeWidth="3" /></svg>
);
const PaletteEmoji = () => (
  <svg width="29" height="24" viewBox="0 0 29 24">
    <path d="M2 8C4 1 12-1 19 3c6 3.500 10 9 8 14-1 3-4 1-6 1s-2 2-2 4-3 3-7 0C4 18 0 14 2 8z" fill="#d08a35" />
    <path d="M18 13c3-1 5 1 4 3s-4 2-5 0 0-3 1-3z" fill="#fafafa" />
    <circle cx="7" cy="8" r="2.800" fill="#3aa7e8" /><circle cx="13" cy="4.500" r="2.600" fill="#3cb64a" /><circle cx="20" cy="8" r="2.200" fill="#f3d23b" /><circle cx="12" cy="16.500" r="3.300" fill="#7a2fc0" /><circle cx="25" cy="13" r="2.200" fill="#e9524d" />
  </svg>
);
const CloudEmoji = () => (
  <svg width="21" height="16" viewBox="0 0 21 16"><defs><linearGradient id="cl" x2="0" y2="1"><stop offset="0" stopColor="#fdfdfe" /><stop offset="1" stopColor="#c8d3e0" /></linearGradient></defs><path d="M5 15.500a4.300 4.300 0 01-.8-8.500A6 6 0 0115 4.500a3.600 3.600 0 012 3.300 3.900 3.900 0 01-.5 7.700z" fill="url(#cl)" stroke="#d5dce5" strokeWidth=".6" /></svg>
);

function Assistant() {
  return (
    <Panel>
      <PanelTabs>
        <PanelTab $w={112} $on>PIES AI</PanelTab>
        <PanelTab $w={130}>PIE Loop</PanelTab>
      </PanelTabs>
      <Frame>
        <AgentHead>
          <Orb><svg width="18" height="22" viewBox="0 0 18 22"><path d="M9 0l1.800 8.400L18 11l-7.200 2.600L9 22l-1.800-8.400L0 11l7.200-2.600z" fill="#fff" /></svg></Orb>
          <Txt $s={30.500} $w={600} $ls={0.300} $l={14} $c="#0a0a0a">PIES AI</Txt>
          <Live />
          <Governed><ThinShield w={16} h={18} sw={1.300} /><Txt $s={21} $w={500} $l={11} $c="#14171f">Auto-governed</Txt></Governed>
          <ToolGroup>
            <Stroke w={28} h={27} d="M1.500 26V1.500H27V21H6.500L1.500 26M14.200 6.500v9.500M9.500 11.200H19" color="#55698a" sw={2.200} />
            <MdHistory size={30} color="#55698a" />
            <MdManageHistory size={32} color="#55698a" />
          </ToolGroup>
        </AgentHead>
        <ThreadTabs>
          <ThreadTab>
            <Txt $s={24} $c="#1f2937">add a Refresh button...</Txt>
            <Slot $w={14} $l={25} $t={3}><Stroke w={14} h={14} d="M1 1l11 12M12 1L1 13" color="#8fa0b8" sw={2.200} /></Slot>
          </ThreadTab>
          <Slot $w={20} $l={26}><svg width="19" height="62" viewBox="0 0 19 62" stroke="#5d6f8a" strokeWidth="3"><path d="M9.500 20.500v19M0 30h19" /></svg></Slot>
        </ThreadTabs>
        <Feed>
          <Bubble>
            add a Refresh button to the Books List<br />screen that reloads the books table
            <CopyMark><svg width="20" height="20" viewBox="0 0 20 20" fill="none" stroke="#fff" strokeWidth="1.600"><rect x="4.500" y="1" width="14.500" height="17.500" rx="1.500" /><path d="M1 4v15" /></svg></CopyMark>
          </Bubble>
          <Rewind>
            <Slot $w={26} $t={9}><MdHistory size={26} color="#1a2238" /></Slot>
            <Txt $s={22.200} $c="#6f7583" $l={9} $t={1} $width={166}>Rewind to here</Txt>
            <Txt $s={19} $c="#a0a5b0">v7</Txt>
          </Rewind>
          <Dashes />
          <Para>
            Good news — the <strong>Refresh button is already fully built and</strong><br />
            <strong>wired</strong> on the Books List screen! Here's a summary of what was<br />
            already in place and the one fix I made:
          </Para>
          <H3 $mt={26}>What already existed <CheckEmoji /></H3>
          <List $mt={14.5}>
            <Bullet>
              <strong>Refresh button</strong> (<Code>books_refresh_btn</Code>) — positioned at the<br />
              top of the screen next to the search field, with a refresh<br />
              icon and "Refresh" label
            </Bullet>
            <Bullet $mb={0}>
              <strong>Event</strong> <Code>__pies_simple__books_refresh_btn_click</Code> <strong>(id:</strong><br />
              <strong>5001)</strong> — already wired to the button's <Code>onClick</Code>,<br />
              configured to reload the books table
            </Bullet>
          </List>
          <H3 $mt={27}>What I fixed <PaletteEmoji /></H3>
          <List $mt={14}>
            <Bullet $mb={4}>
              <strong>Button text colour</strong> — changed from dark <Code>#0F172A</Code><br />
              (unreadable on the purple button background) to <strong>white</strong><br />
              <Code>#F</Code> for proper contrast The Refresh button will reload the<br />
              books table data when clicked. No further changes were<br />
              needed! ——— Build receipt (server-verified) ——— Built by<br />
              Claude Opus (latest). ✓ Applied (1): Updated widget<br />
              "books_refresh_btn" on screen "Books List": 1 style key(s)<br />
              set, 0 inline HTML style(s) rewritten <strong>Progress before it</strong><br />
              <strong>was interrupted:</strong>
            </Bullet>
            <Bullet>✓ Reading screen — inspect the app</Bullet>
            <Bullet>✓ Set Widget Style</Bullet>
          </List>
          <Receipt>
            <ThinShield w={16} h={19} sw={1.300} />
            <Slot $w={22} $l={12}><CloudEmoji /></Slot>
            <Txt $s={21.300} $w={600} $c="#717784" $l={9}>Cloud</Txt>
            <Txt $s={20} $c="#9aa1ad" $l={8.5}>·</Txt>
            <Txt $s={21.200} $w={600} $c="#b45309" $l={8.5}>Anthropic</Txt>
            <Txt $s={20} $c="#9aa1ad" $l={8}>·</Txt>
            <Txt $s={21} $w={500} $c="#1f2430" $l={7.5}>Frontier Quality</Txt>
            <Txt $s={21.500} $w={600} $c="#717784" $l={15}>3.1k</Txt>
          </Receipt>
        </Feed>
        <Composer>
          <ComposerRow $h={82} $line><Attach><MdAttachFile size={20} color="#444" /></Attach></ComposerRow>
          <ComposerRow $h={114} $line><Txt $s={26} $c="#9ca3af" $b={14}>Describe what to build next</Txt></ComposerRow>
          <ComposerRow $h={104} $pl={41.5}>
            <Slot $w={8} $b={8}><svg width="8" height="13" viewBox="0 0 8 13" fill="#666">{[1, 6.5, 12].map(y => [1, 7].map(x => <circle key={`${x}-${y}`} cx={x} cy={y} r="1.200" />))}</svg></Slot>
            <Txt $s={20.700} $l={6.5} $c="#0a0a0a" $width={180} $b={7}>Edit automatically</Txt>
            <Slot $w={9} $b={9}><svg width="9" height="5" viewBox="0 0 9 5"><path d="M0 0h9L4.500 5z" fill="#666" /></svg></Slot>
            <Send>Send<Slot $w={22} $l={18}><Stroke w={22} h={22} d="M11 22V1M1 11L11 1l10 10" color="#fff" sw={2} /></Slot></Send>
          </ComposerRow>
        </Composer>
        <Txt $s={18.200} $c="#b0b2b8" $l={39} $t={15}>Enter to send • Shift+Enter for newline • / for commands</Txt>
      </Frame>
    </Panel>
  );
}

export default function App() {
  return (
    <Shell>
      <Global />
      <LeftRail />
      <Body>
        <Header />
        <Columns>
          <Tree />
          <EditorPane />
          <Assistant />
        </Columns>
      </Body>
    </Shell>
  );
}
